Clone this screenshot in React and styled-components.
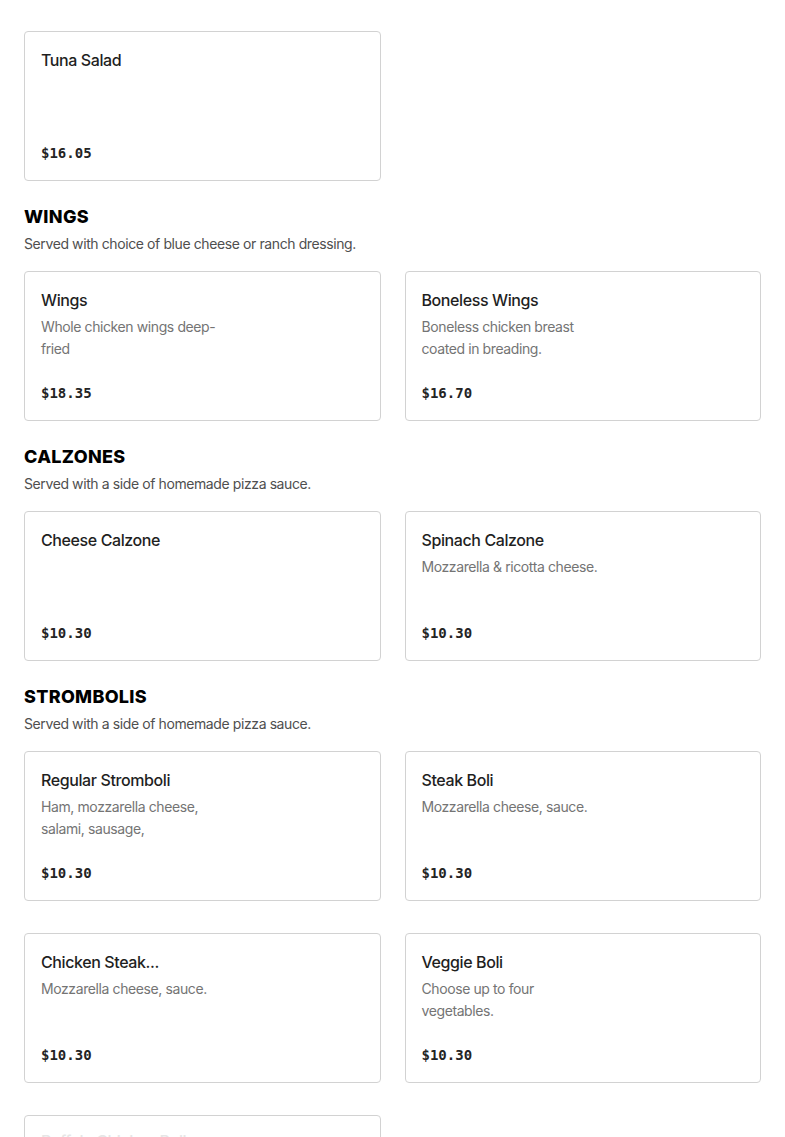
import React from "react";
import styled, { createGlobalStyle } from "styled-components";

const Global = createGlobalStyle`
  html, body { margin: 0; padding: 0; background: #ffffff; }
  body { font-family: Inter, "Noto Sans", sans-serif; -webkit-font-smoothing: antialiased; }
`;

const Page = styled.main`
  padding: 31px 24px 0;
`;

const Section = styled.section`
  & + & { margin-top: 24px; }
`;

const Heading = styled.h2`
  margin: 0;
  font-family: Inter, "Liberation Sans", sans-serif;
  font-size: 18px;
  font-weight: 800;
  line-height: 24px;
  letter-spacing: 0.3px;
  color: #000;
  text-transform: uppercase;
`;

const SectionDesc = styled.p`
  margin: 4px 0 16px;
  font-size: 14px;
  line-height: 22px;
  letter-spacing: -0.4px;
  color: #4f4f4f;
`;

const Grid = styled.div`
  display: grid;
  grid-template-columns: 1fr 1fr;
  column-gap: 24px;
  row-gap: 32px;
`;

const Card = styled.article`
  box-sizing: border-box;
  height: 150px;
  border: 1px solid #d2d2d2;
  border-radius: 4px;
  padding: 16px;
  display: flex;
  flex-direction: column;
  background: #fff;
`;

const Title = styled.h3`
  margin: ${(p) => (p.$faded ? "-3px 0 0" : "0")};
  font-size: 16px;
  font-weight: 500;
  line-height: 24px;
  letter-spacing: -0.4px;
  color: ${(p) => (p.$faded ? "#e6e6e6" : "#1f1f1f")};
  white-space: nowrap;
`;

const Desc = styled.p`
  margin: 4px 0 0;
  max-width: 184px;
  font-size: 14px;
  line-height: 22px;
  letter-spacing: -0.4px;
  color: #747474;
`;

const Price = styled.div`
  margin-top: auto;
  font-family: "DejaVu Sans Mono", "Liberation Mono", monospace;
  font-size: 14px;
  font-weight: 700;
  line-height: 22px;
  color: #242424;
`;

const sections = [
  {
    items: [{ name: "Tuna Salad", price: "$16.05" }],
  },
  {
    title: "Wings",
    desc: "Served with choice of blue cheese or ranch dressing.",
    items: [
      { name: "Wings", desc: "Whole chicken wings deep-fried", price: "$18.35" },
      { name: "Boneless Wings", desc: "Boneless chicken breast coated in breading.", price: "$16.70" },
    ],
  },
  {
    title: "Calzones",
    desc: "Served with a side of homemade pizza sauce.",
    items: [
      { name: "Cheese Calzone", price: "$10.30" },
      { name: "Spinach Calzone", desc: "Mozzarella & ricotta cheese.", price: "$10.30" },
    ],
  },
  {
    title: "Strombolis",
    desc: "Served with a side of homemade pizza sauce.",
    items: [
      { name: "Regular Stromboli", desc: "Ham, mozzarella cheese, salami, sausage,", price: "$10.30" },
      { name: "Steak Boli", desc: "Mozzarella cheese, sauce.", price: "$10.30" },
      { name: "Chicken Steak...", desc: "Mozzarella cheese, sauce.", price: "$10.30" },
      { name: "Veggie Boli", desc: "Choose up to four vegetables.", price: "$10.30" },
      { name: "Buffalo Chicken Boli", price: "$10.30", faded: true },
    ],
  },
];

export default function App() {
  return (
    <>
      <Global />
      <Page>
        {sections.map((s, i) => (
          <Section key={i}>
            {s.title && <Heading>{s.title}</Heading>}
            {s.desc && <SectionDesc>{s.desc}</SectionDesc>}
            <Grid>
              {s.items.map((it) => (
                <Card key={it.name}>
                  <Title $faded={it.faded}>{it.name}</Title>
                  {it.desc && <Desc>{it.desc}</Desc>}
                  {!it.faded && <Price>{it.price}</Price>}
                </Card>
              ))}
            </Grid>
          </Section>
        ))}
      </Page>
    </>
  );
}
